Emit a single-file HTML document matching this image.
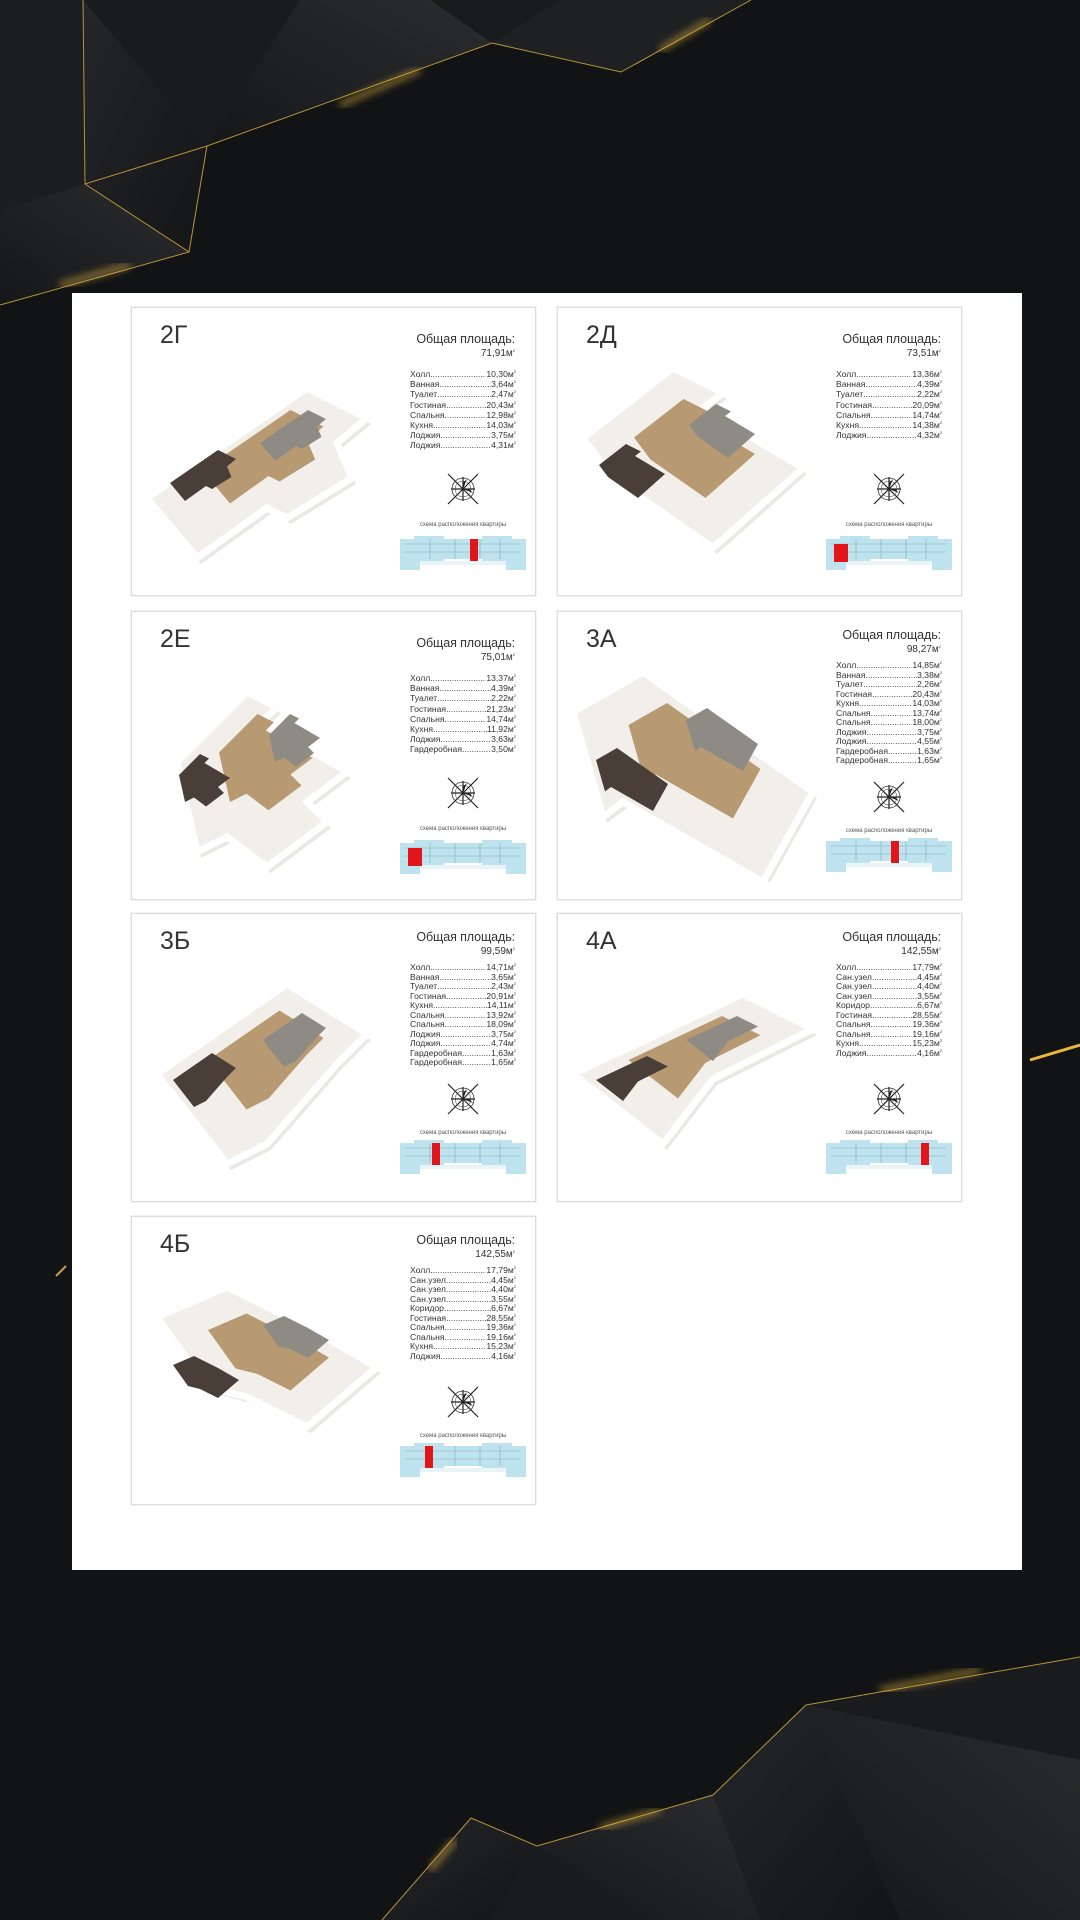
<!DOCTYPE html>
<html><head><meta charset="utf-8"><style>
*{margin:0;padding:0;box-sizing:border-box}
body{width:1080px;height:1920px;overflow:hidden;background:#121314;font-family:"Liberation Sans","DejaVu Sans",sans-serif;position:relative}
#bg{position:absolute;left:0;top:0}
#panel{position:absolute;left:72px;top:293px;width:950px;height:1277px;background:#fff}
.card{position:absolute;width:405px;height:289px;border:1px solid #dcdcdc;background:#fff;box-shadow:0 0 0 1px #f3f3f3}
.t{position:absolute;left:28px;top:13px;font-size:25px;color:#333;font-weight:normal}
.h{position:absolute;right:20px;font-size:12.5px;color:#333;letter-spacing:-.1px}
.a{position:absolute;right:20px;font-size:10px;color:#333}
.l{position:absolute;left:278px;width:106px;font-size:8.6px;color:#333}
.l div{display:flex;white-space:nowrap;overflow:hidden}
.l div span.d{flex:1;overflow:hidden}
.l div span.d:after{content:"............................................"}
sup{font-size:4px;line-height:0;vertical-align:4px}
.cmp{position:absolute;left:311px;width:40px;height:40px}
.sc{position:absolute;left:268px;width:126px;text-align:center;font-size:6px;color:#555}
.bp{position:absolute;left:268px;width:126px;height:34px}
.fp{position:absolute;left:5px;top:40px;width:265px;height:230px}
</style></head><body>
<svg id="bg" width="1080" height="1920">
<defs>
<linearGradient id="g1" x1="0" y1="0" x2="1" y2="1"><stop offset="0" stop-color="#25262a"/><stop offset="1" stop-color="#141516"/></linearGradient>
<linearGradient id="g2" x1="1" y1="0" x2="0" y2="1"><stop offset="0" stop-color="#2a2c2f"/><stop offset="1" stop-color="#161718"/></linearGradient>
<filter id="bl"><feGaussianBlur stdDeviation="4"/></filter>
</defs>
<polygon points="0,0 751,0 621,72 492,43 207,146 189,252 0,305" fill="#1a1b1d"/>
<polygon points="83,0 207,146 189,252 85,184" fill="url(#g1)"/>
<polygon points="207,146 492,43 430,0 300,0" fill="url(#g2)"/>
<polygon points="492,43 621,72 751,0 560,0" fill="#1f2022"/>
<polygon points="0,0 83,0 85,184 0,210" fill="#1c1d1f"/>
<polygon points="85,184 189,252 0,305 0,210" fill="url(#g2)"/>
<polyline points="83,0 85,184 207,146 492,43 621,72 751,0" fill="none" stroke="#b8923a" stroke-width="1"/>
<polyline points="85,184 189,252 0,305" fill="none" stroke="#b8923a" stroke-width="1"/>
<line x1="207" y1="146" x2="189" y2="252" stroke="#b8923a" stroke-width="1"/>
<line x1="340" y1="105" x2="420" y2="70" stroke="#f0c040" stroke-width="3" filter="url(#bl)"/>
<line x1="660" y1="50" x2="710" y2="20" stroke="#f0c040" stroke-width="3" filter="url(#bl)"/>
<line x1="60" y1="285" x2="130" y2="265" stroke="#f0c040" stroke-width="3" filter="url(#bl)"/>
<polygon points="1080,1657 806,1705 713,1795 537,1846 471,1818 382,1920 1080,1920" fill="#1a1b1d"/>
<polygon points="806,1705 1080,1760 1080,1920 900,1920" fill="url(#g2)"/>
<polygon points="713,1795 806,1705 900,1920 760,1920" fill="url(#g1)"/>
<polygon points="537,1846 713,1795 760,1920 650,1920" fill="url(#g2)"/>
<polygon points="471,1818 537,1846 490,1920 382,1920" fill="url(#g1)"/>
<polyline points="1080,1657 806,1705 713,1795 537,1846 471,1818 382,1920" fill="none" stroke="#b8923a" stroke-width="1"/>
<line x1="880" y1="1690" x2="980" y2="1670" stroke="#f0c040" stroke-width="3" filter="url(#bl)"/>
<line x1="600" y1="1828" x2="660" y2="1810" stroke="#f0c040" stroke-width="3" filter="url(#bl)"/>
<line x1="430" y1="1870" x2="455" y2="1840" stroke="#f0c040" stroke-width="3" filter="url(#bl)"/>
<line x1="1030" y1="1060" x2="1080" y2="1045" stroke="#e8b83a" stroke-width="3"/>
<line x1="56" y1="1276" x2="66" y2="1266" stroke="#c9a13a" stroke-width="2"/>
</svg>
<div id="panel"></div>
<div id="cards"></div>
<script>
var C=[
["2Г",131,307,"71,91",[["Холл","10,30"],["Ванная","3,64"],["Туалет","2,47"],["Гостиная","20,43"],["Спальня","12,98"],["Кухня","14,03"],["Лоджия","3,75"],["Лоджия","4,31"]],0.52,0],
["2Д",557,307,"73,51",[["Холл","13,36"],["Ванная","4,39"],["Туалет","2,22"],["Гостиная","20,09"],["Спальня","14,74"],["Кухня","14,38"],["Лоджия","4,32"]],0.02,1],
["2Е",131,611,"75,01",[["Холл","13,37"],["Ванная","4,39"],["Туалет","2,22"],["Гостиная","21,23"],["Спальня","14,74"],["Кухня","11,92"],["Лоджия","3,63"],["Гардеробная","3,50"]],0.02,2],
["3А",557,611,"98,27",[["Холл","14,85"],["Ванная","3,38"],["Туалет","2,26"],["Гостиная","20,43"],["Кухня","14,03"],["Спальня","13,74"],["Спальня","18,00"],["Лоджия","3,75"],["Лоджия","4,55"],["Гардеробная","1,63"],["Гардеробная","1,65"]],0.45,3],
["3Б",131,913,"99,59",[["Холл","14,71"],["Ванная","3,65"],["Туалет","2,43"],["Гостиная","20,91"],["Кухня","14,11"],["Спальня","13,92"],["Спальня","18,09"],["Лоджия","3,75"],["Лоджия","4,74"],["Гардеробная","1,63"],["Гардеробная","1,65"]],0.2,0],
["4А",557,913,"142,55",[["Холл","17,79"],["Сан.узел","4,45"],["Сан.узел","4,40"],["Сан.узел","3,55"],["Коридор","6,67"],["Гостиная","28,55"],["Спальня","19,36"],["Спальня","19,16"],["Кухня","15,23"],["Лоджия","4,16"]],0.6,1],
["4Б",131,1216,"142,55",[["Холл","17,79"],["Сан.узел","4,45"],["Сан.узел","4,40"],["Сан.узел","3,55"],["Коридор","6,67"],["Гостиная","28,55"],["Спальня","19,36"],["Спальня","19,16"],["Кухня","15,23"],["Лоджия","4,16"]],0.15,3]];
var shapes=[
"M10,150 L170,40 L230,70 L200,95 L215,130 L150,170 L130,160 L60,210 Z",
"M20,90 L110,20 L160,45 L140,60 L240,120 L150,200 L50,130 Z",
"M40,110 L110,40 L140,55 L125,70 L210,120 L170,150 L190,170 L130,215 L90,185 L60,200 Z",
"M10,60 L80,20 L250,140 L200,230 L60,150 L40,165 Z",
"M20,120 L150,30 L230,80 L200,110 L130,190 L90,210 Z",
"M10,120 L180,40 L250,75 L150,125 L100,190 Z",
"M20,60 L90,30 L170,70 L240,110 L170,170 L110,140 L70,130 Z"];
var h="";
C.forEach(function(c,i){
 var n=c[4].length, big=n>8;
 var top=big?49:61, lh=big?9.5:10.2;
 var hy=big?16:24, ay=big?32:40;
 h+='<div class="card" style="left:'+c[1]+'px;top:'+c[2]+'px">';
 h+='<svg class="fp" viewBox="0 0 265 230"><path d="'+shapes[i]+'" fill="#d8d2c8" transform="translate(4,6)" opacity=".5"/><path d="'+shapes[i]+'" fill="#f2efea" stroke="#fff" stroke-width="7"/><path d="'+shapes[i]+'" fill="#b89a72" transform="translate(60,40) scale(.55)"/><path d="'+shapes[i]+'" fill="#4a3f38" transform="translate(30,90) scale(.3)"/><path d="'+shapes[i]+'" fill="#8e8a84" transform="translate(120,50) scale(.3)"/></svg>';
 h+='<div class="t">'+c[0]+'</div>';
 h+='<div class="h" style="top:'+hy+'px">Общая площадь:</div>';
 h+='<div class="a" style="top:'+ay+'px">'+c[3]+'м<sup>2</sup></div>';
 h+='<div class="l" style="top:'+top+'px;line-height:'+lh+'px">';
 c[4].forEach(function(r){h+='<div style="height:'+lh+'px"><span>'+r[0]+'</span><span class="d"></span><span>'+r[1]+'м<sup>2</sup></span></div>'});
 h+='</div>';
 var cy=big?165:161;
 h+='<svg class="cmp" style="top:'+cy+'px" viewBox="0 0 40 40"><circle cx="20" cy="20" r="11" fill="none" stroke="#333" stroke-width=".8"/><circle cx="20" cy="20" r="8" fill="none" stroke="#333" stroke-width=".5"/><path d="M5,5 L35,35 M35,5 L5,35 M20,8 L20,32 M8,20 L32,20" stroke="#222" stroke-width="1.2"/><path d="M20,20 L24,10 L20,14Z M20,20 L30,24 L26,20Z" fill="#222"/></svg>';
 h+='<div class="sc" style="top:'+(big?216:214)+'px">схема расположения квартиры</div>';
 var rx=[70,8,8,65,32,95,25][i];
 h+='<svg class="bp" style="top:'+(big?226:228)+'px" viewBox="0 0 126 34"><rect x="0" y="3" width="126" height="20" fill="#bfe3ee"/><rect x="14" y="0" width="30" height="26" fill="#bfe3ee"/><rect x="82" y="0" width="30" height="26" fill="#bfe3ee"/><rect x="0" y="10" width="20" height="24" fill="#bfe3ee"/><rect x="106" y="10" width="20" height="24" fill="#bfe3ee"/><rect x="20" y="25" width="86" height="4" fill="#e8f4f7"/><path d="M5,8 H120 M5,16 H120 M30,3 V23 M55,3 V23 M80,3 V23 M100,3 V23" stroke="#7aaeba" stroke-width=".6"/><rect x="'+rx+'" y="'+(i==1||i==2?8:3)+'" width="'+(i==1||i==2?14:8)+'" height="'+(i==1||i==2?18:22)+'" fill="#e0161b"/></svg>';
 h+='</div>';
});
document.getElementById("cards").innerHTML=h;
</script>
</body></html>
